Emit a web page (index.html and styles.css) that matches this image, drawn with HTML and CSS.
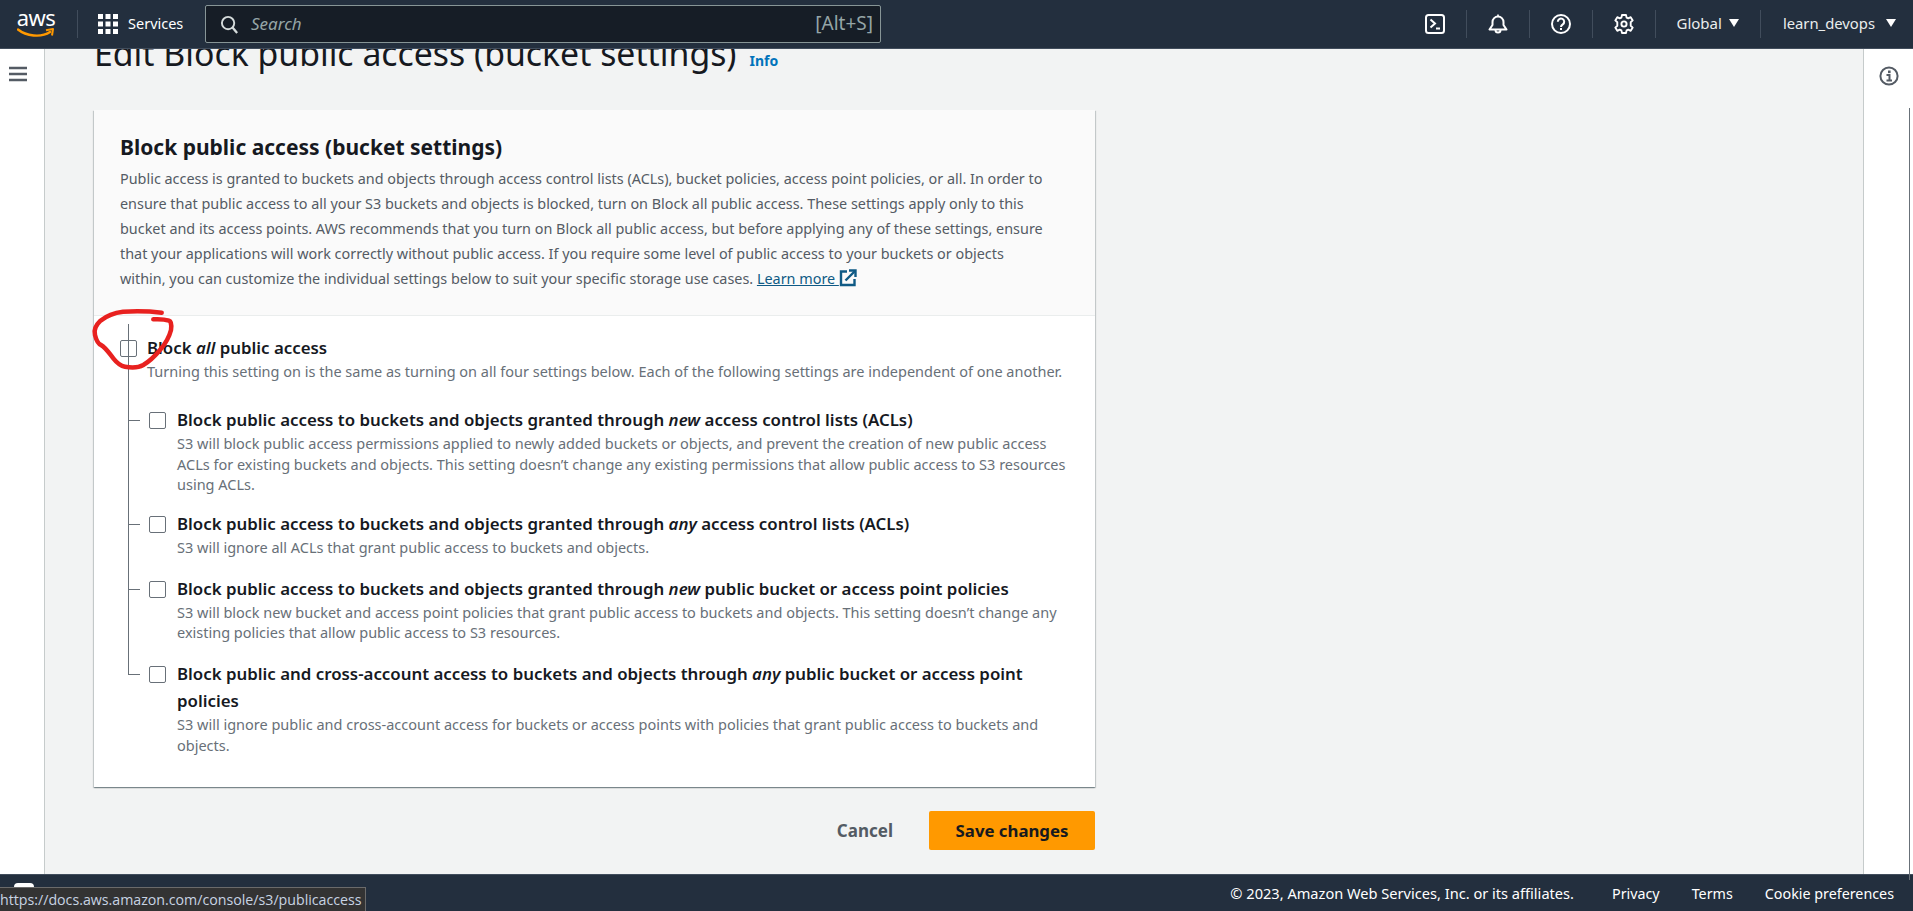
FILE: index.html
```html
<!DOCTYPE html>
<html lang="en">
<head>
<meta charset="utf-8">
<title>Edit Block public access (bucket settings)</title>
<link rel="stylesheet" href="styles.css">
</head>
<body>
<header class="topnav">
  <a class="logo"><span class="logo-text">aws</span>
    <svg class="smile" viewBox="0 0 38 12" width="38" height="12"><path d="M1 2.5C9 9 24 11 33 5" fill="none" stroke="#ff9900" stroke-width="2.4" stroke-linecap="round"/><path d="M29 3.2L36 2L35 8.5" fill="none" stroke="#ff9900" stroke-width="2" stroke-linejoin="round"/></svg>
  </a>
  <span class="nav-sep sep-logo"></span>
  <a class="services">
    <svg viewBox="0 0 20 20" width="20" height="20"><g fill="#fff"><rect width="5" height="5"/><rect x="7.5" width="5" height="5"/><rect x="15" width="5" height="5"/><rect y="7.5" width="5" height="5"/><rect x="7.5" y="7.5" width="5" height="5"/><rect x="15" y="7.5" width="5" height="5"/><rect y="15" width="5" height="5"/><rect x="7.5" y="15" width="5" height="5"/><rect x="15" y="15" width="5" height="5"/></g></svg>
    <span class="services-label">Services</span>
  </a>
  <div class="search">
    <svg viewBox="0 0 20 20" width="19" height="19"><circle cx="8.5" cy="8.5" r="6.5" fill="none" stroke="#d5dbdb" stroke-width="2"/><path d="M13 13l5 6" stroke="#d5dbdb" stroke-width="2.4"/></svg>
    <span class="search-text">Search</span>
    <span class="search-key">[Alt+S]</span>
  </div>
  <div class="nav-right">
    <a class="nav-icon"><svg viewBox="0 0 20 20" width="20" height="20"><rect x="1" y="1" width="18" height="18" rx="2.5" fill="none" stroke="#fff" stroke-width="2"/><path d="M5.5 5.5L10 9.5L5.5 13.5" fill="none" stroke="#fff" stroke-width="2"/><path d="M11 14.5h4" stroke="#fff" stroke-width="2"/></svg></a>
    <span class="nav-sep"></span>
    <a class="nav-icon"><svg viewBox="0 0 20 20" width="20" height="20"><path d="M1.5 15.5h17L15.5 11V8a5.5 5.5 0 0 0-11 0v3z" fill="none" stroke="#fff" stroke-width="2" stroke-linejoin="round"/><path d="M7.5 16a2.5 2.5 0 0 0 5 0" fill="none" stroke="#fff" stroke-width="2"/><path d="M10 0.5v2" stroke="#fff" stroke-width="1.6"/></svg></a>
    <span class="nav-sep"></span>
    <a class="nav-icon"><svg viewBox="0 0 20 20" width="20" height="20"><circle cx="10" cy="10" r="9" fill="none" stroke="#fff" stroke-width="2"/><path d="M6.8 7.8a3.2 3.2 0 1 1 5 2.6c-1.2.8-1.8 1.3-1.8 2.6" fill="none" stroke="#fff" stroke-width="2"/><rect x="9" y="14" width="2" height="2" fill="#fff"/></svg></a>
    <span class="nav-sep"></span>
    <a class="nav-icon"><svg viewBox="0 0 20 20" width="20" height="20"><path d="M8 1h4l.6 2.6 1.7.8 2.4-1.2 2 3.2-2 1.8v3.6l2 1.8-2 3.2-2.4-1.2-1.7.8L12 19H8l-.6-2.6-1.7-.8-2.4 1.2-2-3.2 2-1.8V8.2l-2-1.8 2-3.2 2.4 1.2 1.7-.8z" fill="none" stroke="#fff" stroke-width="1.9" stroke-linejoin="round"/><circle cx="10" cy="10" r="2.6" fill="none" stroke="#fff" stroke-width="1.9"/></svg></a>
    <span class="nav-sep"></span>
    <a class="nav-menu">Global<i class="caret"></i></a>
    <span class="nav-sep"></span>
    <a class="nav-menu nav-menu-last">learn_devops<i class="caret"></i></a>
  </div>
</header>

<div class="layout">
  <aside class="rail rail-left">
    <svg viewBox="0 0 18 16" width="18" height="16"><path d="M0 2h18M0 8h18M0 14h18" stroke="#545b64" stroke-width="2.6"/></svg>
  </aside>
  <main class="content">
    <div class="page-head">
      <h1>Edit Block public access (bucket settings)</h1>
      <a class="info">Info</a>
    </div>
    <section class="card">
      <div class="card-head">
        <h2>Block public access (bucket settings)</h2>
        <p>Public access is granted to buckets and objects through access control lists (ACLs), bucket policies, access point policies, or all. In order to<br>ensure that public access to all your S3 buckets and objects is blocked, turn on Block all public access. These settings apply only to this<br>bucket and its access points. AWS recommends that you turn on Block all public access, but before applying any of these settings, ensure<br>that your applications will work correctly without public access. If you require some level of public access to your buckets or objects<br>within, you can customize the individual settings below to suit your specific storage use cases. <a class="learn">Learn more <svg viewBox="0 0 18 18" width="18" height="18"><path d="M8 2.5H2v13.5h13.5V10" fill="none" stroke="#0f5a85" stroke-width="2.4"/><path d="M6.5 11.5L16 2" stroke="#0f5a85" stroke-width="2.4"/><path d="M10 1.5h6.5V8" fill="none" stroke="#0f5a85" stroke-width="2.4"/></svg></a></p>
      </div>
      <div class="card-body">
        <div class="opt opt-all">
          <span class="check"></span>
          <div>
            <div class="opt-title">Block <em>all</em> public access</div>
            <div class="opt-desc">Turning this setting on is the same as turning on all four settings below. Each of the following settings are independent of one another.</div>
          </div>
        </div>
        <div class="tree">
          <div class="opt sub sub-1">
            <span class="check"></span>
            <div>
              <div class="opt-title">Block public access to buckets and objects granted through <em>new</em> access control lists (ACLs)</div>
              <div class="opt-desc">S3 will block public access permissions applied to newly added buckets or objects, and prevent the creation of new public access ACLs for existing buckets and objects. This setting doesn’t change any existing permissions that allow public access to S3 resources using ACLs.</div>
            </div>
          </div>
          <div class="opt sub">
            <span class="check"></span>
            <div>
              <div class="opt-title">Block public access to buckets and objects granted through <em>any</em> access control lists (ACLs)</div>
              <div class="opt-desc">S3 will ignore all ACLs that grant public access to buckets and objects.</div>
            </div>
          </div>
          <div class="opt sub">
            <span class="check"></span>
            <div>
              <div class="opt-title">Block public access to buckets and objects granted through <em>new</em> public bucket or access point policies</div>
              <div class="opt-desc">S3 will block new bucket and access point policies that grant public access to buckets and objects. This setting doesn’t change any existing policies that allow public access to S3 resources.</div>
            </div>
          </div>
          <div class="opt sub sub-last">
            <span class="check"></span>
            <div>
              <div class="opt-title">Block public and cross-account access to buckets and objects through <em>any</em> public bucket or access point policies</div>
              <div class="opt-desc">S3 will ignore public and cross-account access for buckets or access points with policies that grant public access to buckets and objects.</div>
            </div>
          </div>
        </div>
      </div>
      <svg class="scribble" viewBox="0 0 90 70" width="90" height="70"><path d="M71.7 4.7C58 3 44 3 33 3.7C22 5 15 9 10.5 12.7C6 17 3.5 22 5 27C6.5 33 8 36 11 37C16 40 19 45 23.3 50.3C27 55 31 58 35 58.7C42 60 48 60 53.3 57C60 53 65 48 70 42C76 35 79.5 28 81 22C82 15 80 13 79 12.7C74 11 69 11 63.3 11.3" fill="none" stroke="#e8211f" stroke-width="4.5" stroke-linecap="round" stroke-linejoin="round"/></svg>
    </section>
    <div class="actions">
      <a class="btn-cancel">Cancel</a>
      <a class="btn-save">Save changes</a>
    </div>
  </main>
  <aside class="rail rail-right">
    <svg viewBox="0 0 20 20" width="20" height="20"><circle cx="10" cy="10" r="8.6" fill="none" stroke="#545b64" stroke-width="2"/><rect x="9" y="4.5" width="2.6" height="2.6" fill="#545b64"/><path d="M7.5 9h3v5M7.5 14.5h5.5" fill="none" stroke="#545b64" stroke-width="2"/></svg>
  </aside>
</div>

<footer class="footer">
  <span class="copy">© 2023, Amazon Web Services, Inc. or its affiliates.</span>
  <a>Privacy</a>
  <a>Terms</a>
  <a>Cookie preferences</a>
</footer>

<span class="scroll-thumb"></span>
<span class="feedback-peek"></span>
<div class="status-url">https://docs.aws.amazon.com/console/s3/publicaccess</div>
</body>
</html>
```
FILE: styles.css
```css
* { box-sizing: border-box; }
html, body { height: 100%; }
body {
  margin: 0;
  height: 911px;
  overflow: hidden;
  display: flex;
  flex-direction: column;
  position: relative;
  background: #f2f3f3;
  color: #16191f;
  font-family: "Noto Sans", "Open Sans", sans-serif;
  font-size: 14px;
}
svg { display: block; flex: none; }

.topnav {
  height: 49px;
  flex: none;
  display: flex;
  align-items: center;
  padding: 0 0 0 17px;
  background: #232f3e;
  border-bottom: 1px solid #414d5c;
  color: #fff;
  position: relative;
  z-index: 1;
}
.logo { width: 38px; height: 36px; display: flex; flex-direction: column; align-items: center; margin-top: -2px; }
.logo-text { font-size: 22px; line-height: 24px; font-weight: 400; letter-spacing: -0.5px; }
.smile { margin-top: -2px; }
.nav-sep { width: 1px; height: 28px; background: #414d5c; flex: none; }
.sep-logo { margin-left: 22px; }
.services { display: flex; align-items: center; gap: 10px; margin-left: 20px; font-size: 14.5px; width: 107px; }
.services-label { padding-bottom: 2px; }
.search {
  width: 676px;
  height: 38px;
  display: flex;
  align-items: center;
  padding: 0 7px 0 14px;
  background: #161d26;
  border: 1px solid #879596;
  border-radius: 2px;
  color: #95a5a6;
  font-size: 17px;
}
.search-text { margin-left: 12px; font-style: italic; padding-bottom: 2px; }
.search-key { margin-left: auto; font-size: 19px; padding-bottom: 2px; }
.nav-right { margin-left: auto; display: flex; align-items: center; }
.nav-icon { width: 62px; display: flex; justify-content: center; }
.nav-menu { display: flex; align-items: center; gap: 7px; padding: 0 21px 2px 21px; font-size: 15px; color: #eaeded; }
.nav-menu-last { padding: 0 17px 2px 22px; gap: 11px; font-size: 14.8px; }
.caret {
  width: 0;
  height: 0;
  border-left: 5.5px solid transparent;
  border-right: 5.5px solid transparent;
  border-top: 8px solid #fff;
}

.layout { flex: 1; min-height: 0; display: flex; }
.rail { width: 45px; flex: none; background: #fff; display: flex; justify-content: center; padding-top: 18px; }
.rail-left { border-right: 1px solid #c6cbcb; padding-right: 8px; padding-top: 17px; }
.rail-right { width: 50px; border-left: 1px solid #c6cbcb; padding-top: 17px; }

.content { flex: 1; min-width: 0; padding: 0 0 0 49px; overflow: hidden; }
.page-head { display: flex; align-items: baseline; gap: 13px; margin-top: -19px; height: 80px; }
h1 { margin: 0; font-size: 33.8px; line-height: 46px; font-weight: 400; }
.info { color: #0073bb; font-size: 14px; font-weight: 700; }

.card {
  position: relative;
  width: 1001px;
  height: 677px;
  background: #fff;
  box-shadow: 0 1px 1px 0 rgba(0,28,36,.3), 1px 1px 1px 0 rgba(0,28,36,.15), -1px 1px 1px 0 rgba(0,28,36,.15);
}
.card-head { height: 206px; padding: 22px 10px 0 26px; background: #fafafa; border-bottom: 1px solid #eaeded; }
h2 { margin: 0 0 4px; font-size: 21px; line-height: 30px; font-weight: 700; }
.card-head p { margin: 0; font-size: 14.4px; line-height: 25px; color: #545b64; }
.learn { color: #0f5a85; text-decoration: underline; }
.learn svg { display: inline-block; vertical-align: -3px; }

.card-body { padding: 18px 20px 0 26px; }
.opt { display: flex; gap: 10px; }
.sub { gap: 11px; }
.check { width: 17px; height: 17px; flex: none; margin-top: 6px; border: 1px solid #687078; border-radius: 2px; background: #fff; }
.opt-title { font-size: 16.85px; line-height: 27px; font-weight: 600; color: #16191f; }
.opt-desc { font-size: 14.5px; line-height: 20.4px; color: #687078; }
.tree { position: relative; margin: 0 0 0 8px; padding: 25px 0 0 21px; }
.tree::before { content: ""; position: absolute; left: 0; top: -57px; bottom: 0; width: 1px; background: #687078; }
.sub { position: relative; margin-bottom: 17.5px; }
.sub-1 { margin-bottom: 15.5px; }
.sub::before { content: ""; position: absolute; left: -21px; top: 14px; width: 12px; height: 1px; background: #687078; }
.sub-last { margin-bottom: 0; }
.sub-last::after { content: ""; position: absolute; left: -21px; top: 15px; bottom: 0; width: 1px; background: #fff; }

.scribble { position: absolute; left: -4px; top: 198px; }

.actions { display: flex; align-items: center; justify-content: flex-end; width: 1001px; margin-top: 24px; gap: 36px; }
.btn-cancel { font-weight: 700; font-size: 17px; color: #545b64; }
.btn-save {
  width: 166px;
  height: 39px;
  display: flex;
  align-items: center;
  justify-content: center;
  background: #ff9900;
  border-radius: 2px;
  font-weight: 700;
  font-size: 16.8px;
  color: #16191f;
}

.footer {
  height: 37px;
  flex: none;
  display: flex;
  align-items: center;
  justify-content: flex-end;
  gap: 32px;
  padding-right: 19px;
  background: #232f3e;
  border-top: 1px solid #414d5c;
  color: #fff;
  font-size: 14.3px;
}
.copy { margin-right: 6px; font-size: 14.6px; }

.scroll-thumb { position: absolute; right: 3px; top: 108px; width: 1px; height: 772px; background: #687078; }
.feedback-peek { position: absolute; left: 14px; top: 883px; width: 20px; height: 10px; background: #fff; border-radius: 4px 4px 0 0; }
.status-url {
  position: absolute;
  left: 0;
  bottom: 0;
  width: 366px;
  height: 24px;
  background: #333;
  border: 1px solid #6b6b6b;
  border-left: 0;
  border-bottom: 0;
  color: #c8d4e3;
  font-family: "Open Sans", sans-serif;
  font-size: 14.2px;
  line-height: 23px;
  white-space: nowrap;
}
```
